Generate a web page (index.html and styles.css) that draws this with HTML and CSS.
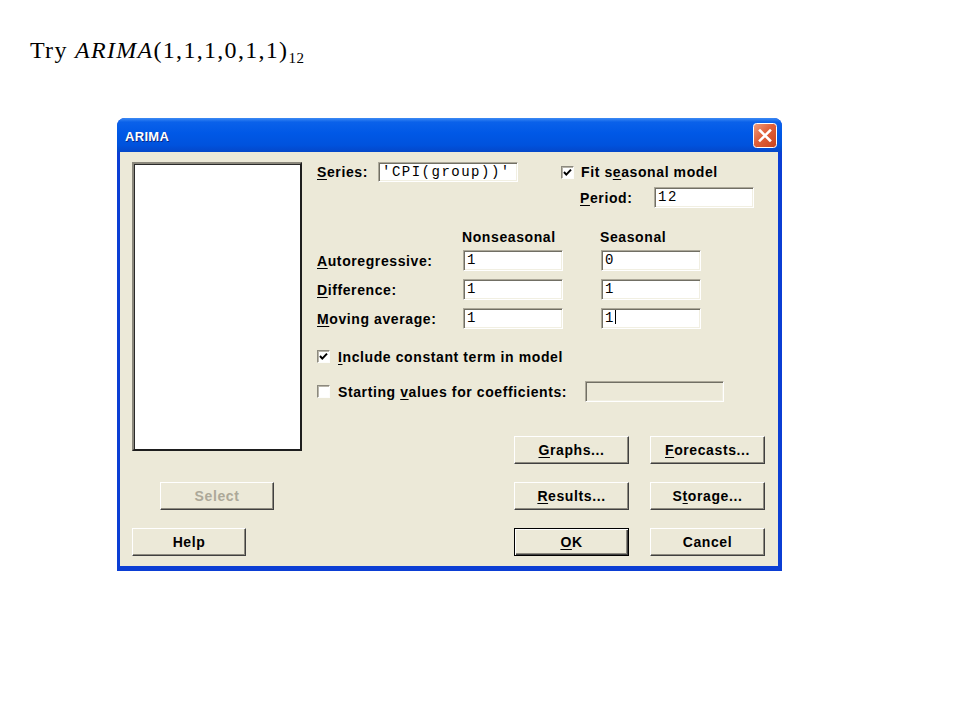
FILE: index.html
```html
<!DOCTYPE html>
<html lang="en">
<head>
    <meta charset="UTF-8">
    <meta name="viewport" content="width=device-width, initial-scale=1.0">
    <title>Try ARIMA</title>
    <link rel="stylesheet" href="styles.css">
</head>
<body>
    <h1 class="slide-title">Try <i>ARIMA</i>(1,1,1,0,1,1)<sub>12</sub></h1>

    <div class="dialog">
        <div class="titlebar">
            <span class="titlebar-text">ARIMA</span>
            <span class="close-btn">
                <svg width="24" height="25" viewBox="0 0 24 25">
                    <defs>
                        <linearGradient id="closeBg" x1="0" y1="0" x2="1" y2="1">
                            <stop offset="0" stop-color="#f0a080"/>
                            <stop offset="0.45" stop-color="#e0603a"/>
                            <stop offset="1" stop-color="#c8421c"/>
                        </linearGradient>
                    </defs>
                    <rect x="0.5" y="0.5" width="23" height="24" rx="3" fill="url(#closeBg)" stroke="#fff"/>
                    <path d="M7 7.5 L17 17.5 M17 7.5 L7 17.5" stroke="#fff" stroke-width="2.6" stroke-linecap="square"/>
                </svg>
            </span>
        </div>

        <div class="client">
            <div class="top-row">
                <div class="listbox"></div>

                <div class="form">
                    <div class="series-row">
                        <span class="lbl series-lbl"><u>S</u>eries:</span>
                        <div class="field series-field">'CPI(group))'</div>
                        <span class="check">
                            <svg width="11" height="11" viewBox="0 0 11 11"><path d="M2 5 L4.3 7.6 L9 2.6" fill="none" stroke="#000" stroke-width="2"/></svg>
                        </span>
                        <span class="lbl">Fit s<u>e</u>asonal model</span>
                    </div>

                    <div class="period-row">
                        <span class="lbl period-lbl"><u>P</u>eriod:</span>
                        <div class="field period-field">12</div>
                    </div>

                    <div class="col-heads">
                        <span class="lbl">Nonseasonal</span>
                        <span class="lbl">Seasonal</span>
                    </div>

                    <div class="order-grid">
                        <span class="lbl"><u>A</u>utoregressive:</span>
                        <div class="field">1</div>
                        <div class="field">0</div>
                        <span class="lbl"><u>D</u>ifference:</span>
                        <div class="field">1</div>
                        <div class="field">1</div>
                        <span class="lbl"><u>M</u>oving average:</span>
                        <div class="field">1</div>
                        <div class="field">1<span class="caret"></span></div>
                    </div>

                    <div class="opt-row include-row">
                        <span class="check">
                            <svg width="11" height="11" viewBox="0 0 11 11"><path d="M2 5 L4.3 7.6 L9 2.6" fill="none" stroke="#000" stroke-width="2"/></svg>
                        </span>
                        <span class="lbl"><u>I</u>nclude constant term in model</span>
                    </div>

                    <div class="opt-row start-row">
                        <div class="opt-label">
                            <span class="check"></span>
                            <span class="lbl">Starting <u>v</u>alues for coefficients:</span>
                        </div>
                        <div class="field coef-field"></div>
                    </div>

                    <div class="btn-pair graphs-pair">
                        <button class="btn"><u>G</u>raphs...</button>
                        <button class="btn"><u>F</u>orecasts...</button>
                    </div>
                </div>
            </div>

            <div class="btn-row">
                <button class="btn btn-select" disabled>Select</button>
                <div class="btn-pair">
                    <button class="btn"><u>R</u>esults...</button>
                    <button class="btn">S<u>t</u>orage...</button>
                </div>
            </div>

            <div class="btn-row">
                <button class="btn btn-help">Help</button>
                <div class="btn-pair">
                    <button class="btn btn-default"><u>O</u>K</button>
                    <button class="btn">Cancel</button>
                </div>
            </div>
        </div>
    </div>
</body>
</html>
```

FILE: styles.css
```css
body {
    margin: 0;
    background: #fff;
    font-family: "Liberation Sans", Arial, sans-serif;
}
.slide-title {
    margin: 0;
    padding: 36px 0 0 30px;
    font: normal 24px/28px "Liberation Serif", "Times New Roman", serif;
    letter-spacing: 1.3px;
    color: #000;
}
.slide-title sub {
    font-size: 15px;
    line-height: 0;
    letter-spacing: 0.5px;
    vertical-align: -5px;
}

.dialog {
    display: flow-root;
    width: 665px;
    margin: 54px 0 0 117px;
    background: #0b3ed4;
    border-radius: 8px 8px 0 0;
}
.titlebar {
    height: 34px;
    box-sizing: border-box;
    padding: 1px 5px 0 8px;
    display: flex;
    align-items: center;
    justify-content: space-between;
    border-radius: 8px 8px 0 0;
    background: linear-gradient(#3d8af4 0, #0a61ea 12%, #0058e6 45%, #0052dd 80%, #0447c9 100%);
}
.titlebar-text {
    color: #fff;
    font-weight: bold;
    font-size: 13px;
    letter-spacing: 0.3px;
    text-shadow: 1px 1px 0 #0a2a8a;
    padding-top: 2px;
}
.close-btn {
    display: flex;
    width: 24px;
    height: 25px;
}

.client {
    margin: 0 4px 5px 3px;
    padding: 10px 13px 10px 12px;
    background: #ece9d8;
}
.top-row {
    display: flex;
    align-items: flex-start;
    height: 302px;
}
.listbox {
    width: 170px;
    height: 289px;
    box-sizing: border-box;
    background: #fff;
    border: 2px solid;
    border-color: #8a877c #1e1e1e #1e1e1e #8a877c;
    box-shadow: inset 1px 1px 0 #2a2a2a;
}
.form {
    width: 448px;
    margin-left: 15px;
}

.lbl {
    font-weight: bold;
    font-size: 14px;
    letter-spacing: 0.6px;
    color: #000;
    white-space: nowrap;
}
u {
    text-underline-offset: 2px;
}

.field {
    box-sizing: border-box;
    width: 100px;
    height: 21px;
    padding: 0 0 0 3px;
    background: #fff;
    border: 1px solid;
    border-color: #aca899 #fff #fff #aca899;
    box-shadow: inset 1px 1px 0 #716f64, inset -1px -1px 0 #f1efe2;
    font: 14px/19px "Liberation Mono", "Courier New", monospace;
    letter-spacing: 1.5px;
    color: #000;
    white-space: nowrap;
}
.caret {
    display: inline-block;
    width: 1px;
    height: 14px;
    background: #000;
    vertical-align: -2px;
}

.check {
    display: flex;
    align-items: center;
    justify-content: center;
    flex: none;
    width: 13px;
    height: 13px;
    box-sizing: border-box;
    background: #fff;
    border: 1px solid;
    border-color: #8c897e #fdfdfb #fdfdfb #8c897e;
    box-shadow: inset 1px 1px 0 #b8b5aa;
}

.series-row {
    display: flex;
    align-items: center;
    height: 20px;
}
.series-lbl {
    width: 61px;
}
.series-field {
    width: 140px;
    height: 20px;
    line-height: 18px;
    margin-right: 43px;
}
.series-row .check {
    margin-right: 7px;
}

.period-row {
    display: flex;
    align-items: center;
    height: 21px;
    margin-top: 5px;
    padding-left: 263px;
}
.period-lbl {
    width: 74px;
}

.col-heads {
    display: flex;
    margin-top: 21px;
    padding-left: 145px;
    line-height: 16px;
}
.col-heads .lbl:first-child {
    width: 138px;
}

.order-grid {
    display: grid;
    grid-template-columns: 146px 138px 100px;
    grid-auto-rows: 21px;
    row-gap: 8px;
    align-items: center;
    margin-top: 5px;
}

.opt-row {
    display: flex;
    align-items: center;
    height: 21px;
    gap: 8px;
}
.include-row {
    margin-top: 17px;
}
.start-row {
    margin-top: 14px;
    gap: 0;
}
.opt-label {
    display: flex;
    align-items: center;
    gap: 8px;
    width: 268px;
}
.coef-field {
    width: 139px;
    background: #ece9d8;
}

.btn-pair {
    display: flex;
    gap: 21px;
}
.graphs-pair {
    justify-content: flex-end;
    margin-top: 34px;
}
.btn-row {
    display: flex;
    justify-content: space-between;
    align-items: center;
    margin-top: 18px;
}

.btn {
    width: 115px;
    height: 28px;
    box-sizing: border-box;
    padding: 0;
    background: #ece9d8;
    border: 1px solid;
    border-color: #fff #404040 #404040 #fff;
    box-shadow: inset -1px -1px 0 #8e8b80;
    font: bold 14px "Liberation Sans", Arial, sans-serif;
    letter-spacing: 0.6px;
    color: #000;
}
.btn-select {
    width: 114px;
    margin-left: 28px;
    color: #aca899;
}
.btn-help {
    width: 114px;
}
.btn-default {
    border: 1px solid #000;
    box-shadow: inset 1px 1px 0 #fff, inset -1px -1px 0 #404040, inset -2px -2px 0 #8e8b80;
}
```
